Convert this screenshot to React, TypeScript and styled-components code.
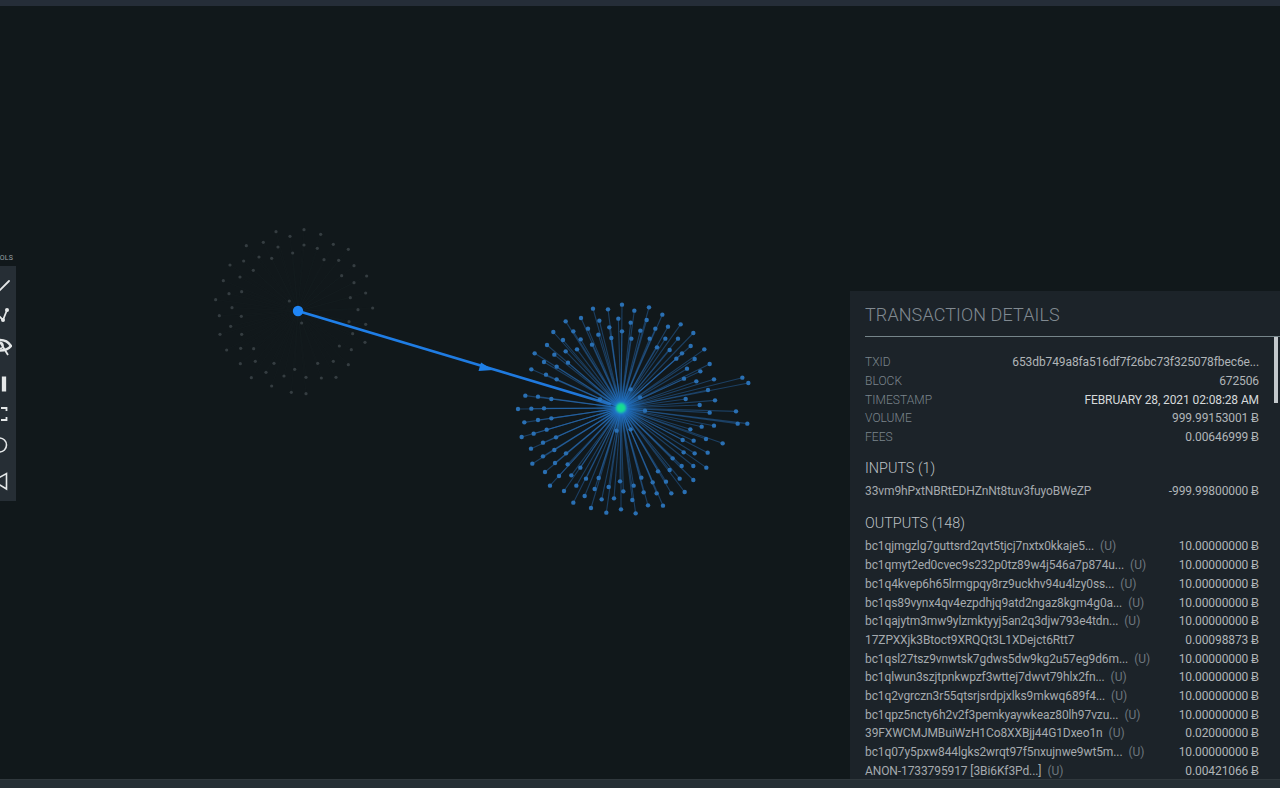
import React from 'react';
import styled, { createGlobalStyle } from 'styled-components';

const GlobalStyle = createGlobalStyle`
  html, body {
    margin: 0;
    padding: 0;
    background: #11181b;
    overflow: hidden;
  }
`;

const Page = styled.div`
  width: 1280px;
  height: 788px;
  display: flex;
  flex-direction: column;
  font-family: Roboto, 'Liberation Sans', sans-serif;
  overflow: hidden;
`;

const TopBar = styled.div`
  height: 6px;
  flex: none;
  background: #252d38;
`;

const BottomBar = styled.div`
  height: 9px;
  flex: none;
  background: #262f35;
  border-top: 1px solid #30383d;
  box-sizing: border-box;
`;

const Canvas = styled.div`
  position: relative;
  flex: 1;
  min-height: 0;
  background: #11181b;
`;

const GraphSvg = styled.svg`
  display: block;
  width: 100%;
  height: 100%;
`;

const SoftGroup = styled.g<{ $blur: number }>`
  filter: blur(${(p) => p.$blur}px);
`;

const ToolsLabel = styled.div`
  position: absolute;
  left: -16px;
  top: 248px;
  width: 29px;
  text-align: right;
  font-size: 7px;
  line-height: 9px;
  letter-spacing: 0.2px;
  color: #9aa2a7;
`;

const Toolbar = styled.div`
  position: absolute;
  left: -16px;
  top: 260px;
  width: 32px;
  height: 235px;
  padding-top: 1px;
  box-sizing: border-box;
  background: #262e35;
  display: flex;
  flex-direction: column;
  align-items: center;
`;

const ToolButton = styled.div<{ $h: number }>`
  height: ${(p) => p.$h}px;
  width: 24px;
  flex: none;
  display: flex;
  align-items: center;
  justify-content: center;
  color: #e4e7e8;
`;

const Panel = styled.div`
  position: absolute;
  right: 0;
  bottom: 0;
  width: 430px;
  height: 488px;
  box-sizing: border-box;
  padding-left: 15px;
  background: #1c2329;
  overflow: hidden;
`;

const PanelTitle = styled.div`
  height: 46px;
  box-sizing: border-box;
  padding-top: 13px;
  font-size: 18px;
  line-height: 22px;
  font-weight: 300;
  letter-spacing: 0.1px;
  color: #818a91;
  border-bottom: 1.5px solid #76858a;
`;

const Scrollbar = styled.div`
  position: absolute;
  right: 2px;
  top: 46px;
  width: 4px;
  height: 66px;
  background: #c3c8cc;
`;

const PanelBody = styled.div`
  padding: 16px 21px 0 0;
`;

const Row = styled.div`
  display: flex;
  justify-content: space-between;
  align-items: center;
  height: 18.7px;
  font-size: 12px;
  line-height: 18px;
  white-space: nowrap;
`;

const Label = styled.span`
  font-weight: 300;
  color: #7b858c;
  letter-spacing: 0.05px;
`;

const Value = styled.span<{ $bright?: boolean }>`
  color: ${(p) => (p.$bright ? '#d6dadb' : '#b0b5b8')};
  letter-spacing: -0.1px;
`;

const Address = styled.span`
  color: #a5aaae;
  letter-spacing: -0.1px;
`;

const Unspent = styled.span`
  color: #6d767d;
  margin-left: 6px;
`;

const SectionTitle = styled.div<{ $top: number; $bottom: number }>`
  margin-top: ${(p) => p.$top}px;
  margin-bottom: ${(p) => p.$bottom}px;
  font-size: 14.4px;
  line-height: 18px;
  font-weight: 300;
  color: #bcc1c5;
`;

const detailRows = [
  { label: 'TXID', value: '653db749a8fa516df7f26bc73f325078fbec6e...' },
  { label: 'BLOCK', value: '672506' },
  { label: 'TIMESTAMP', value: 'FEBRUARY 28, 2021 02:08:28 AM', bright: true },
  { label: 'VOLUME', value: '999.99153001 Ƀ' },
  { label: 'FEES', value: '0.00646999 Ƀ' },
];

const outputs = [
  { addr: 'bc1qjmgzlg7guttsrd2qvt5tjcj7nxtx0kkaje5...', u: true, amount: '10.00000000 Ƀ' },
  { addr: 'bc1qmyt2ed0cvec9s232p0tz89w4j546a7p874u...', u: true, amount: '10.00000000 Ƀ' },
  { addr: 'bc1q4kvep6h65lrmgpqy8rz9uckhv94u4lzy0ss...', u: true, amount: '10.00000000 Ƀ' },
  { addr: 'bc1qs89vynx4qv4ezpdhjq9atd2ngaz8kgm4g0a...', u: true, amount: '10.00000000 Ƀ' },
  { addr: 'bc1qajytm3mw9ylzmktyyj5an2q3djw793e4tdn...', u: true, amount: '10.00000000 Ƀ' },
  { addr: '17ZPXXjk3Btoct9XRQQt3L1XDejct6Rtt7', u: false, amount: '0.00098873 Ƀ' },
  { addr: 'bc1qsl27tsz9vnwtsk7gdws5dw9kg2u57eg9d6m...', u: true, amount: '10.00000000 Ƀ' },
  { addr: 'bc1qlwun3szjtpnkwpzf3wttej7dwvt79hlx2fn...', u: true, amount: '10.00000000 Ƀ' },
  { addr: 'bc1q2vgrczn3r55qtsrjsrdpjxlks9mkwq689f4...', u: true, amount: '10.00000000 Ƀ' },
  { addr: 'bc1qpz5ncty6h2v2f3pemkyaywkeaz80lh97vzu...', u: true, amount: '10.00000000 Ƀ' },
  { addr: '39FXWCMJMBuiWzH1Co8XXBjj44G1Dxeo1n', u: true, amount: '0.02000000 Ƀ' },
  { addr: 'bc1q07y5pxw844lgks2wrqt97f5nxujnwe9wt5m...', u: true, amount: '10.00000000 Ƀ' },
  { addr: 'ANON-1733795917 [3Bi6Kf3Pd...]', u: true, amount: '0.00421066 Ƀ' },
];

// node positions read off the picture at 3x, origin at the crop corner
const blueNodes = [
  [366,44],[279,56],[324,58],[403,62],[447,52],[487,74],[243,84],[197,94],[298,92],[355,86],[392,98],[440,90],
  [504,110],[542,103],[160,126],[220,124],[264,116],[328,112],[366,124],[421,122],[466,116],[580,129],[189,150],
  [242,148],[295,134],[334,144],[394,146],[449,146],[496,146],[534,146],[141,165],[197,184],[231,178],[276,164],
  [471,172],[509,180],[572,168],[613,178],[104,190],[163,194],[546,190],[584,207],[132,216],[204,218],[529,206],
  [629,222],[94,238],[170,230],[561,236],[601,244],[138,254],[170,268],[552,266],[589,274],[642,268],[727,263],
  [745,279],[624,300],[76,317],[114,320],[154,327],[557,327],[645,331],[599,345],[54,357],[94,356],[132,355],
  [708,364],[629,368],[73,397],[114,390],[154,385],[713,401],[742,401],[642,407],[605,410],[571,418],[65,441],
  [101,431],[140,419],[618,447],[581,452],[548,450],[668,460],[93,476],[129,458],[168,442],[623,488],[584,490],
  [551,487],[97,521],[129,499],[163,480],[198,490],[619,533],[580,528],[545,528],[518,505],[135,546],[165,519],
  [203,523],[241,533],[509,540],[580,570],[539,566],[474,544],[150,587],[177,558],[214,556],[258,566],[296,564],
  [498,575],[554,606],[514,610],[192,603],[229,587],[284,597],[326,591],[360,574],[424,563],[458,577],[401,587],
  [370,604],[431,607],[470,610],[220,638],[254,618],[305,628],[342,625],[397,630],[444,646],[489,647],[273,654],
  [319,668],[363,658],[407,670],[392,298],[300,328],[420,322],[435,362],[350,422],[392,418],
].map(([x, y]) => ({ x: 500 + x / 3, y: 290 + y / 3 }));

const ghostNodes = [
  [228,50],[312,44],[270,64],[362,58],[139,92],[190,82],[234,96],[312,90],[400,88],[352,100],[445,103],[278,114],
  [177,126],[215,130],[131,138],[372,134],[416,136],[90,150],[462,152],[160,166],[120,186],[425,182],[500,183],
  [70,197],[462,203],[87,236],[125,230],[497,234],[451,248],[47,254],[268,258],[96,278],[474,284],[518,279],
  [58,302],[124,304],[92,334],[447,320],[497,328],[305,324],[60,358],[125,358],[458,356],[495,382],[80,405],
  [122,400],[161,401],[418,393],[454,404],[121,446],[166,439],[222,445],[353,445],[400,439],[445,449],[198,472],
  [284,463],[154,488],[252,483],[318,487],[364,489],[408,487],[215,513],[274,532],[318,536],
].map(([x, y]) => ({ x: 200 + x / 3, y: 215 + y / 3 }));

const HUB = { x: 621, y: 408 };
const SOURCE = { x: 298, y: 311 };

const Graph = () => (
  <GraphSvg viewBox="0 6 1280 773" preserveAspectRatio="none">
    <defs>
      <radialGradient id="hubGlow">
        <stop offset="0%" stopColor="#1f8fe8" stopOpacity="0.95" />
        <stop offset="35%" stopColor="#1a74cc" stopOpacity="0.5" />
        <stop offset="100%" stopColor="#1a6fc4" stopOpacity="0" />
      </radialGradient>
      <linearGradient id="arrowFade" gradientUnits="userSpaceOnUse" x1={SOURCE.x} y1={SOURCE.y} x2={HUB.x} y2={HUB.y}>
        <stop offset="0%" stopColor="#1f80ea" />
        <stop offset="85%" stopColor="#1f78dc" />
        <stop offset="100%" stopColor="#2a7fd8" stopOpacity="0.7" />
      </linearGradient>
    </defs>

    <SoftGroup $blur={0.5}>
      {ghostNodes.map((n, i) => (
        <line key={i} x1={SOURCE.x} y1={SOURCE.y} x2={n.x} y2={n.y} stroke="#3a4247" strokeOpacity="0.1" strokeWidth="0.6" />
      ))}
      {ghostNodes.map((n, i) => (
        <circle key={i} cx={n.x} cy={n.y} r="1.6" fill="#353d41" />
      ))}
    </SoftGroup>

    <SoftGroup $blur={0.45}>
      {blueNodes.map((n, i) => (
        <line key={i} x1={HUB.x} y1={HUB.y} x2={n.x} y2={n.y} stroke="#2a74c4" strokeOpacity="0.42" strokeWidth="1.1" />
      ))}
      {blueNodes.map((n, i) => (
        <circle key={i} cx={n.x} cy={n.y} r="2.2" fill="#2a70b4" />
      ))}
    </SoftGroup>

    <circle cx={HUB.x} cy={HUB.y} r="26" fill="url(#hubGlow)" />
    <SoftGroup $blur={0.35}>
      <line x1={SOURCE.x} y1={SOURCE.y} x2={HUB.x - 10} y2={HUB.y - 3.5} stroke="url(#arrowFade)" strokeWidth="2.7" />
      <polygon points="493,370 481,362.5 478.5,371" fill="#1f7fe6" />
      <circle cx={SOURCE.x} cy={SOURCE.y} r="5.2" fill="#1f85f5" />
    </SoftGroup>
    <SoftGroup $blur={0.8}>
      <circle cx={HUB.x} cy={HUB.y} r="5" fill="#17dc93" />
    </SoftGroup>
  </GraphSvg>
);

const ToolIcon = ({ children }: { children: React.ReactNode }) => (
  <svg width="24" height="20" viewBox="0 0 24 20" fill="none" stroke="currentColor" strokeWidth="1.8">
    {children}
  </svg>
);

// the page edge cuts the toolbar through the middle of its icons
const tools = [
  {
    h: 36,
    icon: <path d="M7 20 L 21 6" strokeLinecap="round" />,
  },
  {
    h: 24,
    icon: (
      <>
        <path d="M8 8 L 15 15 L 19 5" />
        <circle cx="15" cy="15" r="2" fill="currentColor" stroke="none" />
        <circle cx="19" cy="5" r="2" fill="currentColor" stroke="none" />
      </>
    ),
  },
  {
    h: 38,
    icon: (
      <>
        <path d="M1 10 C 6 2, 18 2, 23 10 C 18 16, 6 16, 1 10 Z" strokeWidth="2.6" />
        <circle cx="12" cy="9.5" r="3" strokeWidth="1.6" />
        <path d="M12 6 L 20 19" strokeWidth="1.8" />
      </>
    ),
  },
  {
    h: 38,
    icon: <path d="M16 2.5 V 17.5" strokeWidth="4.3" />,
  },
  {
    h: 22,
    icon: <path d="M13 4 H 18.5 V 7 M 13 16 H 18.5 V 13" />,
  },
  {
    h: 40,
    icon: <circle cx="11.5" cy="10" r="7" strokeWidth="1.6" />,
  },
  {
    h: 34,
    icon: <path d="M5 9 L 18.5 1.5 V 17 L 12 13 H 5" strokeWidth="1.6" />,
  },
];

const App = () => {
  return (
    <>
      <GlobalStyle />
      <Page>
        <TopBar />
        <Canvas>
          <Graph />
          <ToolsLabel>TOOLS</ToolsLabel>
          <Toolbar>
            {tools.map((t, i) => (
              <ToolButton key={i} $h={t.h}>
                <ToolIcon>{t.icon}</ToolIcon>
              </ToolButton>
            ))}
          </Toolbar>
          <Panel>
            <PanelTitle>TRANSACTION DETAILS</PanelTitle>
            <Scrollbar />
            <PanelBody>
              {detailRows.map((r) => (
                <Row key={r.label}>
                  <Label>{r.label}</Label>
                  <Value $bright={r.bright}>{r.value}</Value>
                </Row>
              ))}
              <SectionTitle $top={14} $bottom={3}>INPUTS (1)</SectionTitle>
              <Row>
                <Address>33vm9hPxtNBRtEDHZnNt8tuv3fuyoBWeZP</Address>
                <Value>-999.99800000 Ƀ</Value>
              </Row>
              <SectionTitle $top={15} $bottom={4}>OUTPUTS (148)</SectionTitle>
              {outputs.map((o) => (
                <Row key={o.addr}>
                  <span>
                    <Address>{o.addr}</Address>
                    {o.u && <Unspent>(U)</Unspent>}
                  </span>
                  <Value>{o.amount}</Value>
                </Row>
              ))}
            </PanelBody>
          </Panel>
        </Canvas>
        <BottomBar />
      </Page>
    </>
  );
};

export default App;
